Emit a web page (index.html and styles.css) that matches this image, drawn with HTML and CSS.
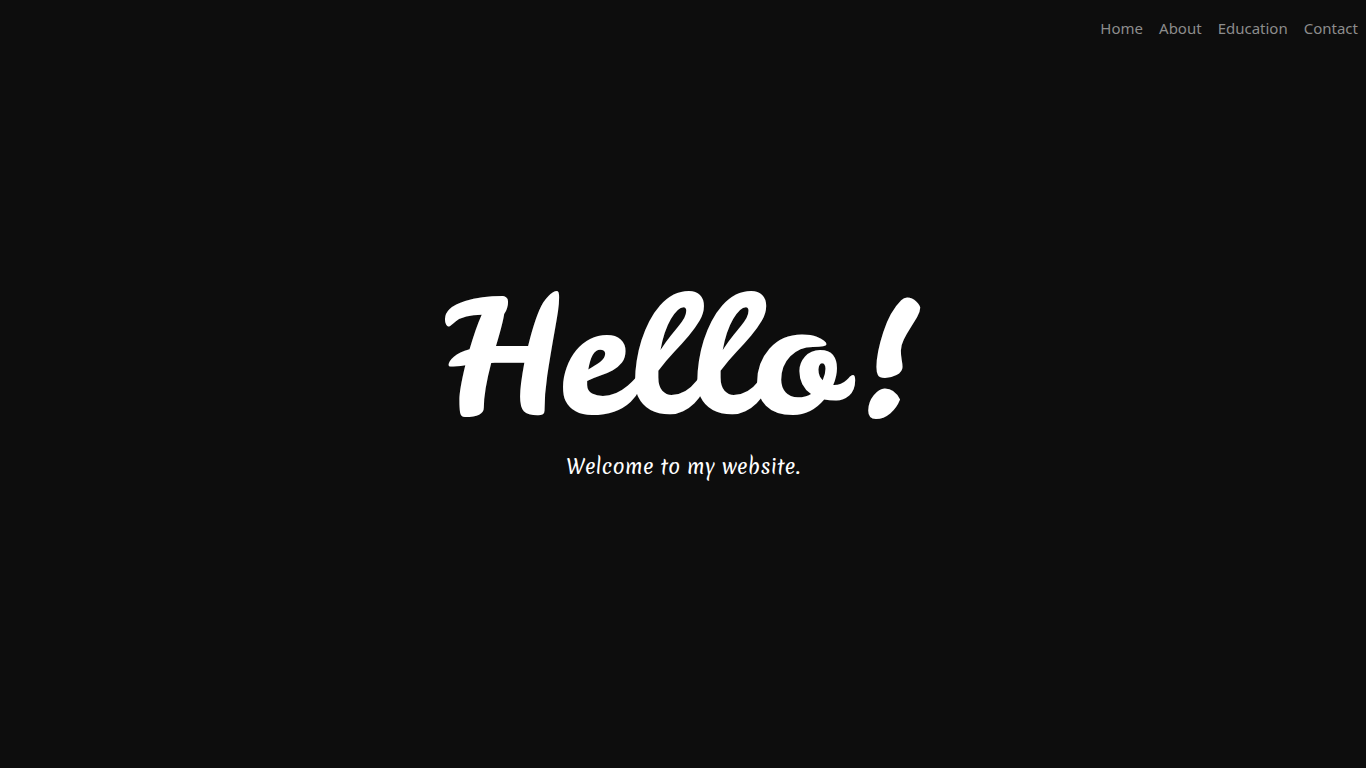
FILE: index.html
```html
<!DOCTYPE html>
<html lang="en">
<head>
<meta charset="utf-8">
<meta name="viewport" content="width=device-width, initial-scale=1">
<title>Hello!</title>
<link rel="stylesheet" href="styles.css">
</head>
<body>
<nav class="navbar" aria-label="Main">
  <a class="nav-link" href="#home">Home</a>
  <a class="nav-link" href="#about">About</a>
  <a class="nav-link" href="#education">Education</a>
  <a class="nav-link" href="#contact">Contact</a>
</nav>
<main class="hero" id="home">
  <h1 class="title">Hello!</h1>
  <p class="subtitle">Welcome to my website.</p>
</main>
</body>
</html>
```

FILE: styles.css
```css
* {
  box-sizing: border-box;
}

body {
  margin: 0;
  min-height: 100vh;
  display: flex;
  flex-direction: column;
  background: #0d0d0d;
  color: #fff;
  font-family: "Noto Sans", "Open Sans", sans-serif;
}

.navbar {
  display: flex;
  justify-content: flex-end;
  padding: 8px 0;
}

.nav-link {
  padding: 8px;
  color: #8c8c8c;
  font-size: 15px;
  line-height: 24px;
  text-decoration: none;
}

.nav-link:hover {
  color: #c3c3c3;
}

.hero {
  flex: 1;
  display: flex;
  flex-direction: column;
  align-items: center;
  justify-content: center;
  padding-bottom: 82px;
  text-align: center;
}

.title {
  margin: 0;
  font-family: "Leckerli One", "Lato", cursive;
  font-size: 164px;
  font-weight: 400;
  line-height: 192px;
}

.subtitle {
  margin: 0;
  font-family: Merienda, "Lato", cursive;
  font-size: 20px;
  line-height: 32px;
}
```
